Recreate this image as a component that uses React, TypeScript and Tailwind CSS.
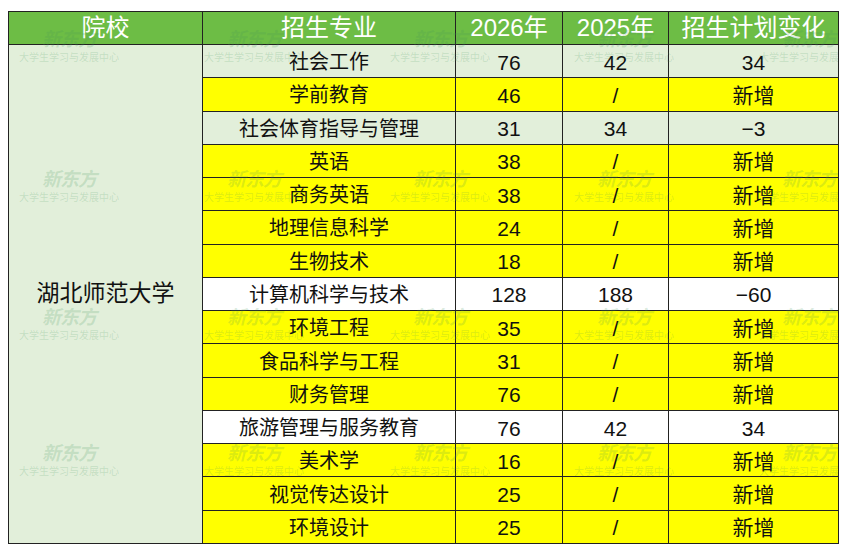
const rows: { major: string; y26: string; y25: string; change: string; bg: string }[] = [
  { major: "社会工作", y26: "76", y25: "42", change: "34", bg: "bg-[#e2efda]" },
  { major: "学前教育", y26: "46", y25: "/", change: "新增", bg: "bg-[#ffff00]" },
  { major: "社会体育指导与管理", y26: "31", y25: "34", change: "−3", bg: "bg-[#e2efda]" },
  { major: "英语", y26: "38", y25: "/", change: "新增", bg: "bg-[#ffff00]" },
  { major: "商务英语", y26: "38", y25: "/", change: "新增", bg: "bg-[#ffff00]" },
  { major: "地理信息科学", y26: "24", y25: "/", change: "新增", bg: "bg-[#ffff00]" },
  { major: "生物技术", y26: "18", y25: "/", change: "新增", bg: "bg-[#ffff00]" },
  { major: "计算机科学与技术", y26: "128", y25: "188", change: "−60", bg: "bg-white" },
  { major: "环境工程", y26: "35", y25: "/", change: "新增", bg: "bg-[#ffff00]" },
  { major: "食品科学与工程", y26: "31", y25: "/", change: "新增", bg: "bg-[#ffff00]" },
  { major: "财务管理", y26: "76", y25: "/", change: "新增", bg: "bg-[#ffff00]" },
  { major: "旅游管理与服务教育", y26: "76", y25: "42", change: "34", bg: "bg-white" },
  { major: "美术学", y26: "16", y25: "/", change: "新增", bg: "bg-[#ffff00]" },
  { major: "视觉传达设计", y26: "25", y25: "/", change: "新增", bg: "bg-[#ffff00]" },
  { major: "环境设计", y26: "25", y25: "/", change: "新增", bg: "bg-[#ffff00]" },
];

// watermark centres, in page pixels
const markXs = [69, 254, 440, 624, 809];
const markYs = [40, 180, 318, 454];

const Watermark = ({ x, y }: { x: number; y: number }) => (
  <div
    className="absolute flex w-[120px] flex-col items-center leading-none text-[rgba(70,150,90,0.2)]"
    style={{ left: x - 8 - 60, top: y - 11 - 10 }}
  >
    <span className="text-[19px] font-bold italic tracking-[-1px]">新东方</span>
    <span className="mt-[4px] text-[10px]">大学生学习与发展中心</span>
  </div>
);

const cell = "border border-[#222] text-center align-middle p-0";

export default function App() {
  return (
    <div className="relative h-[552px] w-[850px] bg-white pl-[8px] pt-[11px] font-['Liberation_Sans','Noto_Sans_CJK_SC',sans-serif] text-[#111]">
      <table className="w-[830px] table-fixed border-collapse">
        <colgroup>
          <col className="w-[194px]" />
          <col className="w-[253px]" />
          <col className="w-[107px]" />
          <col className="w-[106px]" />
          <col className="w-[170px]" />
        </colgroup>
        <thead>
          <tr className="h-[33px] bg-[#6dbd45] text-[24px] leading-none text-white">
            <th className={`${cell} font-normal`}>院校</th>
            <th className={`${cell} font-normal`}>招生专业</th>
            <th className={`${cell} font-normal`}>2026年</th>
            <th className={`${cell} font-normal`}>2025年</th>
            <th className={`${cell} font-normal`}>招生计划变化</th>
          </tr>
        </thead>
        <tbody className="text-[20px] leading-none">
          {rows.map((r, i) => (
            <tr key={i} className={`h-[33.27px] ${r.bg}`}>
              {i === 0 && (
                <td rowSpan={rows.length} className={`${cell} bg-[#e2efda] text-[23px]`}>
                  湖北师范大学
                </td>
              )}
              <td className={`${cell} pt-[2px]`}>{r.major}</td>
              <td className={`${cell} pt-[2px] text-[21px]`}>{r.y26}</td>
              <td className={`${cell} pt-[2px] text-[21px]`}>{r.y25}</td>
              <td className={`${cell} pt-[2px] text-[21px]`}>{r.change}</td>
            </tr>
          ))}
        </tbody>
      </table>
      <div className="pointer-events-none absolute left-[8px] top-[11px] h-[532px] w-[830px] overflow-hidden">
        {markYs.map((y) => markXs.map((x) => <Watermark key={`${x}-${y}`} x={x} y={y} />))}
      </div>
    </div>
  );
}
